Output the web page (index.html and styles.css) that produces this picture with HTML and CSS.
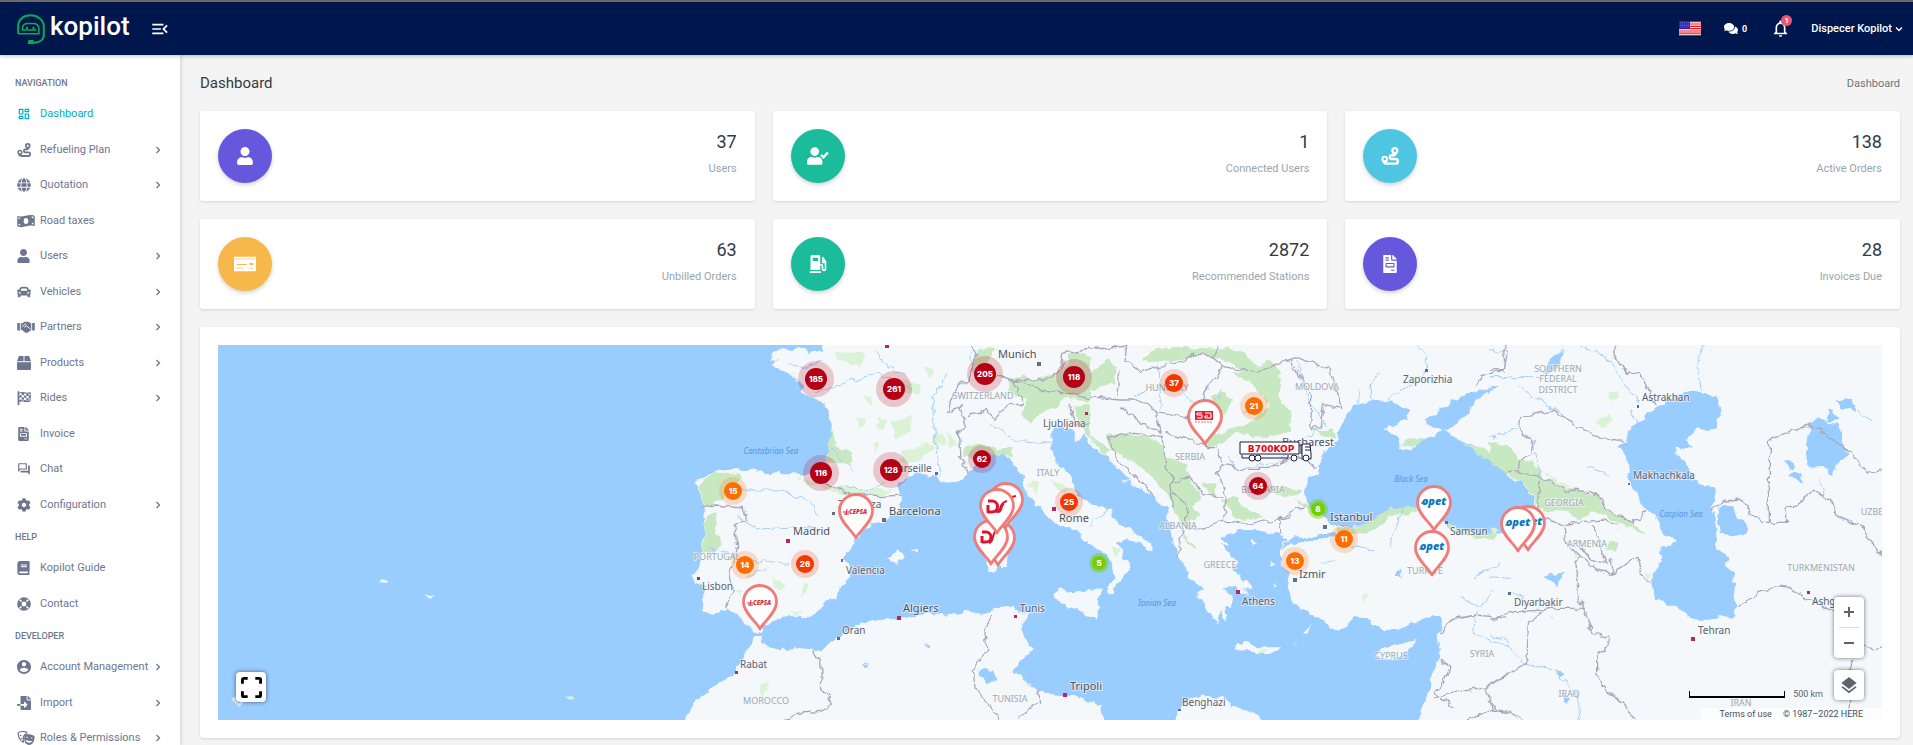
FILE: index.html
```html
<!DOCTYPE html>
<html lang="en">
<head>
<meta charset="utf-8">
<title>Kopilot - Dashboard</title>
<link rel="stylesheet" href="styles.css">
</head>
<body>
<svg class="sprite" aria-hidden="true">
  <symbol id="i-dashboard" viewBox="0 0 24 24"><path d="M19 5v2h-4V5h4M9 5v6H5V5h4m10 8v6h-4v-6h4M9 17v2H5v-2h4M21 3h-8v6h8V3zM11 3H3v10h8V3zm10 8h-8v10h8V11zm-10 4H3v6h8v-6z"/></symbol>
  <symbol id="i-route" viewBox="0 0 24 24"><path fill-rule="evenodd" d="M18.500 0a4.800 4.800 0 0 1 4.800 4.800c0 2.200-1.700 4.700-4.800 7.700-3.100-3-4.800-5.500-4.800-7.700A4.800 4.800 0 0 1 18.500 0zm0 3a1.900 1.900 0 1 0 0 3.800 1.900 1.900 0 0 0 0-3.800zM5 11.500a4.500 4.500 0 0 1 4.500 4.500c0 2.200-1.500 4.600-4.500 8-3-3.400-4.500-5.800-4.500-8A4.500 4.500 0 0 1 5 11.500zm0 2.700a1.800 1.800 0 1 0 0 3.600 1.800 1.800 0 0 0 0-3.600z"/><path d="M17.500 11h-3.200a2.500 2.500 0 0 0 0 5h5.200a3 3 0 0 1 0 6.200H6.500" fill="none" stroke="currentColor" stroke-width="3.200"/></symbol>
  <symbol id="i-globe" viewBox="0 0 496 512"><path d="M336.500 160C322 70.700 287.800 8 248 8s-74 62.700-88.500 152h177zM152 256c0 22.200 1.200 43.500 3.300 64h185.300c2.100-20.500 3.300-41.800 3.300-64s-1.200-43.500-3.300-64H155.300c-2.100 20.500-3.300 41.800-3.300 64zm324.700-96c-28.600-67.900-86.500-120.400-158-141.600 24.400 33.800 41.200 84.700 50 141.600h108zM177.200 18.400C105.800 39.600 47.800 92.100 19.300 160h108c8.700-56.900 25.500-107.800 49.900-141.600zM487.400 192H372.700c2.100 21 3.300 42.500 3.300 64s-1.200 43-3.300 64h114.600c5.500-20.500 8.600-41.800 8.600-64s-3.100-43.500-8.500-64zM120 256c0-21.500 1.200-43 3.300-64H8.600C3.200 212.500 0 233.800 0 256s3.200 43.500 8.600 64h114.600c-2-21-3.200-42.500-3.200-64zm39.500 96c14.500 89.300 48.700 152 88.500 152s74-62.700 88.500-152h-177zm159.300 141.600c71.400-21.200 129.400-73.700 158-141.600h-108c-8.800 56.900-25.600 107.800-50 141.600zM19.300 352c28.600 67.900 86.500 120.400 158 141.600-24.400-33.800-41.200-84.700-50-141.600h-108z"/></symbol>
  <symbol id="i-money" viewBox="0 0 30 24"><path fill-rule="evenodd" d="M1.500 3.500C10 6.800 18-.5 28.500 2.600c.9.300 1.500 1 1.500 1.900v14.400c0 1.200-.8 1.900-1.800 1.600C18.500 17.500 11 25.200 1.400 21.600.6 21.200 0 20.400 0 19.500V4.600c0-1 .7-1.500 1.500-1.100zM15 7a4 5 0 1 0 0 10 4 5 0 0 0 0-10zM2.300 6v3c1.700 0 3-1.100 3-2.500zM27.700 4.800c-1.700-.3-2.700-.4-3.300-.3.200 1.600 1.500 2.800 3.300 2.900zM2.300 19c1.200.5 2.300.6 3.300.6-.1-1.700-1.400-3-3.300-3zM24.700 17.500c1.200.1 2.200.3 3 .5v-3.500c-1.700.1-3 1.400-3 3z"/></symbol>
  <symbol id="i-user" viewBox="0 0 448 512"><path d="M224 256c70.700 0 128-57.300 128-128S294.700 0 224 0 96 57.300 96 128s57.300 128 128 128zm89.600 32h-16.700c-22.200 10.200-46.900 16-72.900 16s-50.600-5.800-72.900-16h-16.700C60.200 288 0 348.200 0 422.400V464c0 26.500 21.500 48 48 48h352c26.500 0 48-21.500 48-48v-41.600c0-74.200-60.200-134.400-134.400-134.400z"/></symbol>
  <symbol id="i-usercheck" viewBox="0 0 640 512"><path d="M224 256c70.700 0 128-57.300 128-128S294.700 0 224 0 96 57.300 96 128s57.300 128 128 128zm89.600 32h-16.700c-22.200 10.200-46.900 16-72.900 16s-50.600-5.800-72.900-16h-16.700C60.200 288 0 348.200 0 422.400V464c0 26.500 21.500 48 48 48h352c26.500 0 48-21.500 48-48v-41.600c0-74.200-60.200-134.400-134.400-134.400z"/><path d="M410 225l70 70 130-140" fill="none" stroke="currentColor" stroke-width="72"/></symbol>
  <symbol id="i-car" viewBox="0 0 512 512"><path d="M499.990 176h-59.870l-16.640-41.600C406.380 91.630 365.570 64 319.500 64h-127c-46.060 0-86.880 27.630-103.990 70.400L71.870 176H12.010C4.200 176-1.530 183.340.37 190.910l6 24C7.700 220.250 12.500 224 18.010 224h20.070C24.650 235.730 16 252.780 16 272v48c0 16.120 6.160 30.670 16 41.930V416c0 17.670 14.330 32 32 32h32c17.670 0 32-14.330 32-32v-32h256v32c0 17.670 14.330 32 32 32h32c17.670 0 32-14.330 32-32v-54.070c9.840-11.250 16-25.800 16-41.930v-48c0-19.220-8.650-36.270-22.070-48H494c5.510 0 10.310-3.750 11.640-9.090l6-24c1.890-7.570-3.840-14.910-11.650-14.910zm-352.060-17.830c7.290-18.220 24.940-30.170 44.570-30.170h127c19.630 0 37.280 11.950 44.570 30.170L384 208H128l19.930-49.830zM96 319.800c-19.200 0-32-12.760-32-31.900S76.800 256 96 256s48 28.710 48 47.850-28.800 15.950-48 15.950zm320 0c-19.200 0-48 3.190-48-15.950S396.800 256 416 256s32 12.760 32 31.900-12.800 31.900-32 31.900z"/></symbol>
  <symbol id="i-handshake" viewBox="0 0 30 24"><path d="M0 5h4.500v13H0zM25.500 5H30v13h-4.500zM6 5.500h3l3-2.500h7l4 2.500h1V18h-1.500l-4.500 4h-4l-6-5H6z"/><path d="M8.500 11.500l5-4.500 2 .3M12 12.500l4-2.500 6.500 5.500" fill="none" stroke="#fff" stroke-width="1.500"/></symbol>
  <symbol id="i-box" viewBox="0 0 512 512"><path d="M509.500 184.600L458.900 32.800C452.400 13.200 434.100 0 413.400 0H272v192h238.700c-.4-2.500-.4-5-1.200-7.400zM240 0H98.600c-20.700 0-39 13.200-45.500 32.800L2.500 184.600c-.8 2.400-.8 4.900-1.200 7.400H240V0zM0 224v240c0 26.500 21.500 48 48 48h416c26.500 0 48-21.500 48-48V224H0z"/></symbol>
  <symbol id="i-flag" viewBox="0 0 24 24"><path d="M1 1.500a1.500 1.500 0 0 1 3 0V24H1z"/><path d="M4 3.500c7-3 10 2.500 18.500-.5v14c-8 3.500-11.500-2.500-18.500.5" fill="none" stroke="currentColor" stroke-width="1.800"/><path d="M8 2.500l4 .7v4l-4-.7zM16 4.500l4 0v4l-4 0zM4 7.500l4-1v4l-4 1zM12 7.200l4 1.300v4l-4-1.300zM20 8.500l3-1v4l-3 1zM8 10.500l4 .7v4l-4-.7zM16 12.500l4 0v4l-4 0zM4 15l4-.5v3l-4 1zM12 15.200l4 1.300v2.500l-4-1z"/></symbol>
  <symbol id="i-invoice" viewBox="0 0 384 512"><path d="M288 256H96v64h192v-64zm89-151L279.100 7c-4.500-4.500-10.600-7-17-7H256v128h128v-6.100c0-6.300-2.500-12.400-7-16.900zm-153 31V0H24C10.700 0 0 10.700 0 24v464c0 13.300 10.700 24 24 24h336c13.300 0 24-10.700 24-24V160H248c-13.200 0-24-10.800-24-24zM64 72c0-4.420 3.580-8 8-8h80c4.420 0 8 3.580 8 8v16c0 4.420-3.580 8-8 8H72c-4.420 0-8-3.580-8-8V72zm0 64c0-4.420 3.580-8 8-8h80c4.420 0 8 3.580 8 8v16c0 4.420-3.580 8-8 8H72c-4.420 0-8-3.580-8-8v-16zm256 304c0 4.420-3.580 8-8 8h-80c-4.420 0-8-3.580-8-8v-16c0-4.420 3.580-8 8-8h80c4.420 0 8 3.580 8 8v16zm0-200v96c0 8.840-7.160 16-16 16H80c-8.840 0-16-7.160-16-16v-96c0-8.840 7.160-16 16-16h224c8.840 0 16 7.160 16 16z"/></symbol>
  <symbol id="i-chat" viewBox="0 0 24 24"><path d="M15 4v7H5.170L4 12.170V4h11m1-2H3c-.55 0-1 .45-1 1v14l4-4h10c.55 0 1-.45 1-1V3c0-.55-.45-1-1-1zm5 4h-2v9H6v2c0 .55.45 1 1 1h11l4 4V7c0-.55-.45-1-1-1z"/></symbol>
  <symbol id="i-cog" viewBox="0 0 512 512"><path d="M487.400 315.700l-42.600-24.600c4.300-23.200 4.300-47 0-70.200l42.600-24.600c4.900-2.800 7.100-8.600 5.500-14-11.100-35.600-30-67.800-54.700-94.600-3.800-4.100-10-5.100-14.800-2.300L380.800 110c-17.900-15.400-38.500-27.300-60.800-35.100V25.800c0-5.600-3.900-10.500-9.400-11.700-36.700-8.200-74.300-7.800-109.200 0-5.500 1.200-9.400 6.100-9.400 11.700V75c-22.200 7.900-42.800 19.800-60.800 35.100L88.700 85.500c-4.900-2.800-11-1.900-14.800 2.300-24.700 26.700-43.600 58.900-54.700 94.600-1.700 5.400.6 11.200 5.500 14L67.300 221c-4.300 23.200-4.300 47 0 70.200l-42.600 24.600c-4.900 2.800-7.100 8.600-5.500 14 11.100 35.600 30 67.800 54.700 94.600 3.800 4.100 10 5.100 14.800 2.300l42.600-24.600c17.900 15.400 38.500 27.300 60.800 35.100v49.200c0 5.600 3.900 10.500 9.400 11.700 36.700 8.200 74.300 7.800 109.200 0 5.500-1.200 9.400-6.100 9.400-11.700v-49.200c22.200-7.900 42.800-19.800 60.800-35.100l42.600 24.600c4.900 2.800 11 1.900 14.800-2.300 24.700-26.700 43.600-58.900 54.700-94.600 1.500-5.500-.7-11.300-5.600-14.100zM256 336c-44.100 0-80-35.900-80-80s35.900-80 80-80 80 35.900 80 80-35.900 80-80 80z"/></symbol>
  <symbol id="i-book" viewBox="0 0 448 512"><path d="M448 360V24c0-13.300-10.700-24-24-24H96C43 0 0 43 0 96v320c0 53 43 96 96 96h328c13.300 0 24-10.700 24-24v-16c0-7.500-3.500-14.300-8.900-18.700-4.200-15.400-4.200-59.300 0-74.700 5.400-4.300 8.900-11.100 8.900-18.600zM128 134c0-3.300 2.700-6 6-6h212c3.300 0 6 2.700 6 6v20c0 3.300-2.700 6-6 6H134c-3.300 0-6-2.700-6-6v-20zm0 64c0-3.300 2.700-6 6-6h212c3.300 0 6 2.700 6 6v20c0 3.300-2.700 6-6 6H134c-3.300 0-6-2.700-6-6v-20zm253.400 250H96c-17.700 0-32-14.300-32-32 0-17.600 14.400-32 32-32h285.400c-1.900 17.100-1.900 46.900 0 64z"/></symbol>
  <symbol id="i-ring" viewBox="0 0 24 24"><circle cx="12" cy="12" r="8" fill="none" stroke="currentColor" stroke-width="7.500"/><path d="M4.500 4.500l3.200 3.200M19.500 4.500l-3.200 3.200M4.500 19.500l3.200-3.200M19.500 19.500l-3.200-3.200" stroke="#fff" stroke-width="2.600"/></symbol>
  <symbol id="i-account" viewBox="2 2 20 20"><path d="M12 2C6.480 2 2 6.480 2 12s4.480 10 10 10 10-4.480 10-10S17.520 2 12 2zm0 3c1.660 0 3 1.340 3 3s-1.340 3-3 3-3-1.340-3-3 1.340-3 3-3zm0 14.200c-2.500 0-4.710-1.280-6-3.220.03-1.990 4-3.080 6-3.080 1.990 0 5.970 1.090 6 3.080-1.290 1.940-3.500 3.220-6 3.220z"/></symbol>
  <symbol id="i-import" viewBox="0 0 512 512"><path d="M16 288c-8.800 0-16 7.200-16 16v32c0 8.800 7.200 16 16 16h112v-64zm489-183L407.100 7c-4.500-4.500-10.600-7-17-7H384v128h128v-6.100c0-6.300-2.500-12.400-7-16.900zm-153 31V0H152c-13.300 0-24 10.700-24 24v264h128v-65.200c0-14.300 17.300-21.400 27.400-11.300L379 308c6.600 6.700 6.600 17.400 0 24l-95.700 96.400c-10.100 10.100-27.400 3-27.400-11.300V352H128v136c0 13.300 10.700 24 24 24h336c13.300 0 24-10.700 24-24V160H376c-13.200 0-24-10.800-24-24z"/></symbol>
  <symbol id="i-masks" viewBox="0 0 30 24"><path d="M1.500 3C6 .5 11 .2 16 2l.5 3C11 6 10 9 10.500 19 5 17.500 2 12 1.500 3z" fill="none" stroke="currentColor" stroke-width="2"/><path d="M4.500 7.500l3 .5M6 13.500l3-1.500" stroke="currentColor" stroke-width="1.800"/><path fill-rule="evenodd" d="M13 6.500c5-1.700 11-1 16.500 2 .7 5-1 15-9.500 15.500-8-1-9.500-10-7-17.500zm1.800 4l4 1.700c-.5-2.400-3-3-4-1.700zm7.500 2l4 .5c-.5-2-3.200-2.200-4-.5zM14 15c1 6 9 7 12 1.500-4 1-8 .5-12-1.500z"/></symbol>
  <symbol id="i-card" viewBox="0 0 24 16"><path fill-rule="evenodd" d="M0 0h24v2H0zM0 3.500h24V16H0zM3 8v1h11V8zm0 4v1h7v-1zm14-5v2h4V7zm0 5v1h4v-1z"/><path d="M0 2h24v1.500H0z" opacity=".8"/></symbol>
  <symbol id="i-pump" viewBox="0 0 24 24"><path fill-rule="evenodd" d="M2 2a2 2 0 0 1 2-2h9a2 2 0 0 1 2 2v18H2zm3 1.500V8h7V3.500zM1 21.500h15V24H1z"/><path d="M15 13h1.500c1.500 0 1.500 1 1.500 2v3.500a2 2 0 0 0 4 0V9l-4-6M18.500 5v5h3" fill="none" stroke="currentColor" stroke-width="2.200"/></symbol>
  <symbol id="i-comments" viewBox="0 0 576 512"><path d="M416 192c0-88.400-93.100-160-208-160S0 103.600 0 192c0 34.300 14.100 65.900 38 92-13.400 30.200-35.500 54.200-35.800 54.500-2.200 2.300-2.800 5.700-1.500 8.700S4.800 352 8 352c36.600 0 66.900-12.300 88.700-25 32.200 15.700 70.300 25 111.300 25 114.900 0 208-71.600 208-160zm122 220c23.900-26 38-57.700 38-92 0-66.900-53.500-124.200-129.300-148.100.9 6.600 1.300 13.300 1.300 20.100 0 105.900-107.700 192-240 192-10.800 0-21.300-.8-31.700-1.900C207.800 439.600 281.800 480 368 480c41 0 79.100-9.200 111.300-25 21.800 12.700 52.100 25 88.700 25 3.200 0 6.100-1.900 7.300-4.800 1.300-2.900.7-6.300-1.500-8.700-.3-.3-22.400-24.200-35.800-54.500z"/></symbol>
  <symbol id="i-bell" viewBox="3 2 18 20"><path d="M12 22c1.100 0 2-.9 2-2h-4c0 1.100.9 2 2 2zm6-6v-5c0-3.070-1.630-5.640-4.500-6.320V4c0-.83-.67-1.500-1.500-1.500s-1.500.67-1.500 1.500v.68C7.640 5.360 6 7.920 6 11v5l-2 2v1h16v-1l-2-2zm-2 1H8v-6c0-2.480 1.510-4.500 4-4.500s4 2.020 4 4.500v6z"/></symbol>
  <symbol id="i-menu" viewBox="3 5 18 14"><path d="M3 18h13v-2H3v2zm0-5h10v-2H3v2zm0-7v2h13V6H3zm18 9.590L17.420 12 21 8.410 19.590 7l-5 5 5 5L21 15.590z"/></symbol>
  <symbol id="i-right" viewBox="0 0 8 8"><path d="M2.500 1l3 3-3 3" fill="none" stroke="currentColor" stroke-width="1.300"/></symbol>
  <symbol id="i-down" viewBox="0 0 8 8"><path d="M1 2.500l3 3 3-3" fill="none" stroke="currentColor" stroke-width="1.300"/></symbol>
  <symbol id="i-layers" viewBox="3 2 18 20"><path d="M11.990 18.540l-7.370-5.730L3 14.070l9 7 9-7-1.630-1.270-7.380 5.740zM12 16l7.360-5.730L21 9l-9-7-9 7 1.630 1.270L12 16z"/></symbol>
  <symbol id="i-full" viewBox="0 0 22 22"><path d="M1.500 7V3a1.500 1.500 0 0 1 1.500-1.500h4M15 1.500h4A1.500 1.500 0 0 1 20.500 3v4M20.500 15v4a1.500 1.500 0 0 1-1.500 1.500h-4M7 20.500H3A1.500 1.500 0 0 1 1.500 19v-4" fill="none" stroke="#000" stroke-width="3"/></symbol>
  <symbol id="pin" viewBox="-18 -46 36 47" overflow="visible"><path d="M0-1C-3-8-16.500-17-16.500-28a16.500 16.500 0 0 1 33 0C16.500-17 3-8 0-1z" fill="#fff" stroke="#f07c7a" stroke-width="2.800" stroke-linejoin="round"/></symbol>
</svg>

<header class="topbar">
  <a class="brand" href="#" aria-label="kopilot">
    <svg class="brand-mark" viewBox="0 0 28 30" aria-hidden="true"><path d="M1.200 20V12C1.200 5.500 6.500 1.200 13.500 1.200S26.800 6 26.800 12.500v8c0 5.500-4.500 8.300-10.500 8.300H13" fill="none" stroke="#0aab55" stroke-width="2"/><path d="M1.200 19.800h20.600V14.500c0-3.500-2.300-5-5.800-5h-5c-3.500 0-5.500 2-5.500 5v1.500h14" fill="none" stroke="#0aab55" stroke-width="1.600"/><circle cx="10" cy="14" r="1.200" fill="#0aab55"/><circle cx="16.500" cy="14" r="1.200" fill="#0aab55"/><path d="M10.500 30l1-4h5v4z" fill="#0aab55"/></svg>
    <span class="brand-name">kopilot</span>
  </a>
  <button class="icon-btn menu-btn" aria-label="Toggle menu"><svg><use href="#i-menu"/></svg></button>
  <div class="top-actions">
    <button class="icon-btn" aria-label="Language: English">
      <svg class="us-flag" viewBox="0 0 22 15"><path fill="#fff" d="M0 0h22v15H0z"/><path stroke="#f01018" stroke-width="1.200" d="M0 .6h22M0 3h22M0 5.300h22M0 7.600h22M0 10h22M0 12.200h22M0 14.400h22"/><path fill="#2a22b0" d="M0 0h11v8H0z"/><path stroke="#8a86dc" stroke-width=".7" stroke-dasharray="1 1" d="M1 1.500h9M1.500 3h9M1 4.500h9M1.500 6h9"/></svg>
    </button>
    <button class="icon-btn messages" aria-label="Messages"><svg><use href="#i-comments"/></svg><span>0</span></button>
    <button class="icon-btn bell" aria-label="Notifications"><svg><use href="#i-bell"/></svg><span class="badge">1</span></button>
    <button class="icon-btn account">Dispecer Kopilot<svg><use href="#i-down"/></svg></button>
  </div>
</header>

<div class="shell">
  <nav class="sidebar">
    <h2>Navigation</h2>
    <ul>
      <li><a class="active" href="#"><svg class="ico"><use href="#i-dashboard"/></svg>Dashboard</a></li>
      <li><a href="#"><svg class="ico"><use href="#i-route"/></svg>Refueling Plan<svg class="chev"><use href="#i-right"/></svg></a></li>
      <li><a href="#"><svg class="ico"><use href="#i-globe"/></svg>Quotation<svg class="chev"><use href="#i-right"/></svg></a></li>
      <li><a href="#"><svg class="ico wide"><use href="#i-money"/></svg>Road taxes</a></li>
      <li><a href="#"><svg class="ico thin"><use href="#i-user"/></svg>Users<svg class="chev"><use href="#i-right"/></svg></a></li>
      <li><a href="#"><svg class="ico"><use href="#i-car"/></svg>Vehicles<svg class="chev"><use href="#i-right"/></svg></a></li>
      <li><a href="#"><svg class="ico wide"><use href="#i-handshake"/></svg>Partners<svg class="chev"><use href="#i-right"/></svg></a></li>
      <li><a href="#"><svg class="ico"><use href="#i-box"/></svg>Products<svg class="chev"><use href="#i-right"/></svg></a></li>
      <li><a href="#"><svg class="ico"><use href="#i-flag"/></svg>Rides<svg class="chev"><use href="#i-right"/></svg></a></li>
      <li><a href="#"><svg class="ico thin"><use href="#i-invoice"/></svg>Invoice</a></li>
      <li><a href="#"><svg class="ico"><use href="#i-chat"/></svg>Chat</a></li>
      <li><a href="#"><svg class="ico"><use href="#i-cog"/></svg>Configuration<svg class="chev"><use href="#i-right"/></svg></a></li>
    </ul>
    <h2>Help</h2>
    <ul>
      <li><a href="#"><svg class="ico thin"><use href="#i-book"/></svg>Kopilot Guide</a></li>
      <li><a href="#"><svg class="ico"><use href="#i-ring"/></svg>Contact</a></li>
    </ul>
    <h2>Developer</h2>
    <ul>
      <li><a href="#"><svg class="ico"><use href="#i-account"/></svg>Account Management<svg class="chev"><use href="#i-right"/></svg></a></li>
      <li><a href="#"><svg class="ico"><use href="#i-import"/></svg>Import<svg class="chev"><use href="#i-right"/></svg></a></li>
      <li><a href="#"><svg class="ico wide"><use href="#i-masks"/></svg>Roles &amp; Permissions<svg class="chev"><use href="#i-right"/></svg></a></li>
    </ul>
  </nav>

  <main class="content">
    <div class="page-head"><h1>Dashboard</h1><span>Dashboard</span></div>
    <section class="stats">
      <article class="card stat"><span class="disc violet"><svg><use href="#i-user"/></svg></span><div><strong>37</strong><span>Users</span></div></article>
      <article class="card stat"><span class="disc green"><svg class="big"><use href="#i-usercheck"/></svg></span><div><strong>1</strong><span>Connected Users</span></div></article>
      <article class="card stat"><span class="disc cyan"><svg><use href="#i-route"/></svg></span><div><strong>138</strong><span>Active Orders</span></div></article>
      <article class="card stat"><span class="disc amber"><svg class="big"><use href="#i-card"/></svg></span><div><strong>63</strong><span>Unbilled Orders</span></div></article>
      <article class="card stat"><span class="disc green"><svg><use href="#i-pump"/></svg></span><div><strong>2872</strong><span>Recommended Stations</span></div></article>
      <article class="card stat"><span class="disc violet"><svg><use href="#i-invoice"/></svg></span><div><strong>28</strong><span>Invoices Due</span></div></article>
    </section>

    <section class="card map-card">
      <div class="map">
        <svg class="map-svg" viewBox="218 345 1664 375" preserveAspectRatio="xMidYMid slice" role="img" aria-label="Map of Europe with stations">
          <defs>
            <filter id="rough" x="0" y="0" width="1" height="1" filterUnits="objectBoundingBox" color-interpolation-filters="sRGB"><feTurbulence type="fractalNoise" baseFrequency=".11" numOctaves="2" seed="4"/><feDisplacementMap in="SourceGraphic" scale="8" xChannelSelector="R" yChannelSelector="G"/></filter>
          </defs>
          <rect class="sea" x="200" y="330" width="1700" height="400"/>
          <g filter="url(#rough)">
            <rect x="190" y="320" width="1720" height="420" fill="none"/>
            <!-- western sheet -->
            <g transform="translate(680 330) scale(.33333)">
              <g class="land">
                <path d="M428 20L425 62 385 72 372 55 345 50 335 60 300 58 272 72 270 92 300 88 275 108 315 122 335 132 370 165 365 190 400 205 440 228 445 260 455 285 448 340 440 385 430 420 400 438 340 430 270 430 200 420 130 415 95 430 50 455 55 480 68 520 75 560 75 600 66 650 65 690 40 740 52 760 75 768 72 800 68 842 100 848 140 838 175 850 190 880 235 908 250 885 290 865 340 860 400 862 430 815 468 808 475 775 515 740 500 700 492 680 530 630 560 590 610 575 660 540 665 510 655 490 655 460 680 440 720 425 765 440 800 458 830 455 865 425 905 400 925 372 950 370 990 385 1025 440 1030 470 1070 525 1125 580 1185 600 1225 640 1265 660 1265 540 1195 500 1165 430 1120 395 1120 360 1110 345 1118 300 1150 290 1180 300 1190 340 1215 310 1235 355 1280 375V20z"/>
                <path d="M225 918L245 920 245 940 280 958 350 955 420 965 450 940 500 905 540 880 650 868 740 850 800 858 850 845 910 855 940 835 1000 830 1020 850 1055 850 1020 890 1035 920 1055 960 1000 1020 1030 1050 1080 1085 1170 1095 1262 1125 1275 1200H0L50 1110 100 1070 160 1035 200 960z"/>
                <path d="M1120 790L1140 775 1175 790 1240 778 1275 770 1250 810 1260 840 1250 868 1210 850 1130 810zM905 590L990 570 985 640 980 712 955 710 950 728 925 725 918 690zM622 688L655 662 675 678 650 702zM692 660L715 656 716 668zM950 480L975 470 985 540 965 550z"/>
              </g>
              <g class="wood">
                <path d="M95 428L180 428 195 450 150 470 130 500 90 530 68 520 55 470zM80 560L110 545 105 600 125 640 100 670 66 668zM452 290L468 350 510 370 515 400 470 400 440 395zM890 55L945 50 930 90 880 130zM985 150L1030 135 1060 150 1150 120 1180 60 1260 90V220L1150 205 1140 230 1080 250 1050 280 1030 260 1040 205 985 190zM1180 230L1260 215V360L1200 290zM850 355L900 340 960 360 1000 350 990 380 930 370 880 390 850 380z"/>
                <path class="pale" d="M460 65L560 70 540 110 480 90zM730 110L765 115 750 145zM665 150L720 160 715 200 680 195zM550 190L580 200 570 220zM525 265L560 265 540 300zM590 262L625 275 610 300 590 290zM635 270L695 260 690 300 650 325zM665 365L740 340 770 350 700 400 660 400zM760 320L790 310 800 345 765 345zM580 340L597 340 590 375zM270 740L318 765 300 780zM370 755L390 765 360 800zM330 845L375 843 350 858zM160 780L190 785 180 800zM235 1080L262 1050 265 1075 245 1100zM1040 460L1080 450 1070 490zM1110 450L1165 470 1150 490zM345 440L400 455 470 470 640 480 600 500 480 490 380 460zM800 300L830 340 810 360z"/>
              </g>
              <g class="water"><path d="M890 1022L940 1025 950 1050 920 1060zM730 945L750 942 748 950zM540 1005L565 995 550 1012zM488 1028L508 1022z"/></g>
              <g class="river"><path d="M400 190L460 170 520 150 600 130 700 180M520 420L480 380 452 350M780 440L765 300 760 200 800 130M590 60L620 110 680 140M320 100L380 110 430 90M870 60L880 130 960 130M80 650L200 690 330 700M160 480L300 480 380 510 420 560M620 460L560 480 500 470M930 280L1000 330 1110 340M170 560L240 600 400 590M200 740L270 710"/></g>
              <g class="border"><path d="M64 530L110 525 190 535 200 570 165 590 170 650 150 730 160 780 140 835M400 445L480 480 520 495 600 500 660 495M865 425L840 380 835 310 860 290 840 230 800 245 835 165 860 150 890 80 870 45M860 260L920 235 945 265 980 220 1030 225 1000 150 945 135 890 140M985 150L1100 150 1150 110 1145 70 1200 60 1260 50M1000 150L1080 180 1170 190 1260 215M1170 220L1185 280 1260 290M398 965L422 1000 425 1080 455 1120 440 1140 370 1145 320 1170M935 855L915 900 920 960 880 1020 885 1075 925 1120 958 1170M1075 1080L1075 1120 1010 1170"/></g>
            </g>
            <!-- middle sheet -->
            <g transform="translate(1090 330) scale(.33333)">
              <path class="land" d="M0 20V315L30 370 50 375 75 410 130 465 190 500 230 535 240 590 250 650 275 690 290 730 320 765 345 770 320 790 345 830 350 850 365 845 380 880 390 840 410 875 405 820 425 830 430 800 400 775 430 770 455 795 475 800 462 775 487 778 470 755 430 720 445 700 410 665 395 640 420 650 395 620 450 600 500 600 560 610 590 625 570 660 570 690 575 710 600 725 590 770 600 800 620 830 700 870 735 900 775 890 785 860 830 865 870 900 920 900 970 875 1035 855 1055 860 1055 890 1040 930 1050 960 1030 1030 1010 1100 980 1200H1270V20z"/>
              <path class="land" d="M0 520L30 535 70 538 65 555 85 575 120 600 180 640 185 665 175 670 150 640 110 625 80 640 100 660 95 690 115 695 120 720 95 740 70 785 55 790 50 775 75 745 65 720 62 690 30 655 0 640zM258 1200L265 1145 290 1110 345 1092 400 1105 440 1130 510 1160 515 1200zM438 935L470 940 500 955 570 955 560 970 500 968 440 955zM640 905L665 885 655 912zM612 940L620 925 616 942zM480 630L505 640 485 645zM540 690L560 705 545 712zM555 755L562 770 555 772zM90 450L130 452 100 456zM520 800L530 805zM500 720L510 724z"/>
              <path class="water" d="M820 215L790 225 745 300 740 335 700 370 685 435 655 440 640 495 660 530 700 560 740 588 830 590 900 535 980 535 1060 575 1090 600 1180 620 1275 600V440L1200 390 1150 345 1090 320 1060 295 1040 315 1000 330 960 360 930 355 925 325 880 295 950 270 960 240 900 210zM1210 172L1110 195 1060 235 1005 270 1030 295 1080 300 1105 270 1140 250 1150 215zM568 665L600 620 650 625 690 615 735 605 740 618 650 636 600 640zM915 735L930 715 935 745zM795 770L800 790zM440 700zM130 200L170 180 165 190z"/>
              <path class="land" d="M870 955L900 950 980 930 940 975 895 993 865 980z"/>
              <g class="wood"><path d="M155 90L200 55H420L470 70 500 110 540 90 575 130 565 200 605 250 600 300 520 325 440 310 400 340 350 350 360 320 440 290 490 270 540 230 500 170 430 130 460 120 400 90 330 70 240 95zM0 130L60 90 80 105 70 160 0 180zM50 310L180 320 220 350 225 380 290 400 300 450 340 500 310 530 330 560 280 580 250 520 190 440 110 380 60 360zM330 460L380 460 375 500zM395 510L440 500 470 540 530 560 440 570zM540 470L640 480 620 500 550 490zM620 510L660 530 650 540zM740 595L820 590 900 535 990 533 980 545 900 560 830 615 740 605zM1075 580L1180 615 1220 600 1210 630 1090 610zM1115 340L1170 350 1260 400V435L1200 390zM930 350L960 325 1010 325 980 345zM660 300L738 300 735 330zM0 315L60 360 40 375zM360 200L400 190 430 210 400 260zM270 600L320 650 310 660zM240 520L290 520 310 590 270 580z"/><path class="pale" d="M820 785L838 800 820 815zM60 650L90 660 80 680zM500 962L528 962 510 970zM410 760L440 780zM300 200L320 220 300 230z"/></g>
              <g class="river"><path d="M208 110L210 240M280 190L330 240 310 280M400 180L350 250 340 330M410 380L440 415 560 400 640 330 680 300M800 240L810 180M850 215L840 160M830 180L870 130M890 210L950 170 1005 130 1010 80 980 45M620 90L650 200 710 290M940 520L900 650M1160 840L1150 910 1260 950M1110 800L1170 830 1210 780M1150 740L1230 700M780 650L850 660M690 700L740 690M0 590L60 530M460 250L520 240"/></g>
              <g class="border"><path d="M0 60L110 45 105 90 150 125 270 95 310 70 370 80 400 110 350 180 330 230 290 260 200 245 150 210 90 210 0 200M90 120L80 200M370 80L385 45M400 110L500 125 590 90 630 80 720 120 740 190 755 235 700 225 690 290 662 300 665 200 600 90M380 350L350 350 330 290 290 260M200 250L210 310 160 280 90 230M55 320L130 310 220 320 225 390 250 450 240 490 250 530M55 320L80 390 150 450 190 500M230 310L300 330 350 350M380 360L400 400 440 415 540 415 620 380 685 410M400 400L380 430 410 500 400 570 440 580 550 575 640 530M250 460L300 440 340 490 400 500M240 490L290 520 290 600 340 600 400 570M280 600L260 680M600 560L565 570 570 610M1050 915L1080 870 1160 855 1260 865M1035 1100L1190 1070 1260 1030M1050 990L1080 1010 1060 1060 1035 1085 1090 1130M1190 1070L1210 1140 1260 1150M1130 1170L1210 1140M1160 165L1170 140 1240 120 1250 60"/></g>
            </g>
            <!-- eastern sheet -->
            <g transform="translate(1490 330) scale(.33333)">
              <path class="land" d="M50 20H1210V1200H50z"/>
              <path class="water" d="M0 385L50 435 95 460 130 495 135 540 60 585 0 592zM500 230L550 200 600 183 680 200 692 225 685 250 680 298 620 295 585 335 612 358 560 350 552 370 585 390 605 430 605 450 675 480 665 540 680 580 678 655 720 690 700 700 735 730 730 790 740 858 690 862 635 873 590 860 555 825 495 810 485 740 512 690 515 650 560 640 545 622 520 615 495 560 470 540 430 480 415 430 418 405 385 350 405 340 420 290 455 270zM680 540L700 522 730 525 745 570 775 590 770 612 730 618 690 610zM965 285L985 262 1015 280 1045 285 1055 340 1080 375 1040 405 1030 440 1000 405 955 408 948 340zM1015 235L1040 255 1045 270 1010 275zM1035 212L1070 205 1100 220 1095 245 1060 235zM890 390L905 395 910 420 895 415zM900 432L935 430 932 458zM165 740L225 725 205 765 185 755zM198 1010L218 1025 215 1048zM218 1092L240 1105 225 1118zM190 80L225 60 205 110 160 140zM365 595L400 605 380 600zM0 165L20 175 0 185zM15 315L20 325 5 330z"/>
              <g class="wood"><path d="M0 340L60 350 90 390 130 400 160 440 220 470 270 480 330 500 340 530 400 560 470 612 440 605 370 570 300 545 270 570 240 545 140 540 130 490 90 455 50 430 0 395zM355 640L385 640 380 665 350 655z"/><path class="pale" d="M358 185L383 185 380 210 358 208zM320 280L355 250 372 268 345 298zM255 665L268 680 250 690zM465 725L482 740 478 760zM165 425L240 470 200 470zM0 595L30 600 10 615z"/></g>
              <g class="river"><path d="M270 50L350 80 400 160 450 220M640 45L620 100 635 180M85 170L160 220 220 250M0 140L160 140M130 330L150 440M0 915L40 925 95 1000 190 1020 265 1100 270 1170M1040 560L1100 580M990 450L1000 500M0 740L60 745M60 790L100 800M290 410L360 435M1100 240L1140 270M0 60L40 70M0 320L80 295M180 860L190 870M420 240L440 280M160 130L200 80 220 50"/></g>
              <g class="border"><path d="M0 120L40 118 35 70 50 45M380 45L370 80 400 110 410 130 450 130 470 170 495 225M95 260L190 240 260 285 330 325 380 330 410 345M95 260L90 300 130 340 125 380 90 390 85 420M50 425L80 425 150 440 230 480 300 485 330 500 350 540 430 580 470 540M140 550L150 450M135 555L220 585 270 575 340 570 380 580M225 590L230 640 270 680 320 720 370 730 440 680 460 740 485 760M310 585L330 650 350 700 300 690 270 650M370 730L360 690M270 680L255 700 265 790 285 850 310 910 360 920 350 960 320 970 320 1030 350 1085 400 1120 435 1170M285 835L180 835 160 840 80 845 0 868M160 845L115 880 110 1000 0 1060M0 1110L20 1140 60 1145 100 1170M665 540L700 515 745 507 790 550 810 577 890 577 890 535 930 515 970 480 1030 520 1040 555 1120 590 1160 660 1180 678M838 577V325L965 285 1085 370 1133 430 1180 420M740 830L780 810 800 785 860 770 900 775 950 805 1030 845M1120 942L1150 960 1180 952M1085 990L1075 1170"/></g>
            </g>
          </g>
          <path d="M379 582l8 1 1-2-6-2zM384 576l8 4M424 594l6 2 5-1-5 4z" class="land"/><path d="M565 697l7-1 3 3-5 1z" fill="#d5efd2"/>

          <g class="dots"><path d="M885 344h4v4h-4zM1085 412h3v3h-3zM1052 507h4v4h-4zM786 539h4v4h-4zM697 577h3v3h-3zM897 616h4v4h-4zM1014 615h3v3h-3zM735 671h3v3h-3zM1063 693h4v4h-4zM1236 590h4v4h-4zM1807 591h3v3h-3zM1691 637h4v4h-4z"/><path class="slate" d="M1037 362h4v4h-4zM935 472h3v3h-3zM882 518h4v4h-4zM832 512h3v3h-3zM841 559h2v3h-2zM837 637h3v3h-3zM1425 369h3v3h-3zM1323 525h4v4h-4zM1293 578h4v4h-4zM1445 521h3v3h-3zM1178 709h3v2h-3zM1637 405h2v3h-2zM1628 483h2v2h-2zM1508 592h3v3h-3z"/></g>

          <g class="country">
            <text x="983" y="399">SWITZERLAND</text><text x="1048" y="476">ITALY</text><text x="717" y="560">PORTUGAL</text><text x="766" y="704">MOROCCO</text><text x="1010" y="702">TUNISIA</text><text x="1167" y="391">HUNGARY</text><text x="1317" y="390">MOLDOVA</text><text x="1190" y="460">SERBIA</text><text x="1263" y="493">BULGARIA</text><text x="1178" y="529">ALBANIA</text><text x="1220" y="568">GREECE</text><text x="1425" y="574">TURKIYE</text><text x="1391" y="659">CYPRUS</text><text x="1482" y="657">SYRIA</text><text x="1558" y="372">SOUTHERN</text><text x="1558" y="382">FEDERAL</text><text x="1558" y="393">DISTRICT</text><text x="1564" y="506">GEORGIA</text><text x="1587" y="547">ARMENIA</text><text x="1821" y="571">TURKMENISTAN</text><text x="1872" y="515">UZBE</text><text x="1569" y="697">IRAQ</text><text x="1741" y="706">IRAN</text>
          </g>
          <g class="sea-name"><text x="771" y="454">Cantabrian Sea</text><text x="1411" y="482">Black Sea</text><text x="1157" y="606">Ionian Sea</text><text x="1681" y="517">Caspian Sea</text></g>
          <g class="town">
            <text x="1043" y="427">Ljubljana</text><text x="889" y="472">Marseille</text><text x="838" y="508">Zaragoza</text><text x="846" y="574">Valencia</text><text x="702" y="590">Lisbon</text><text x="1020" y="612">Tunis</text><text x="842" y="634">Oran</text><text x="740" y="668">Rabat</text><text x="1403" y="383">Zaporizhia</text><text x="1242" y="605">Athens</text><text x="1450" y="535">Samsun</text><text x="1182" y="706">Benghazi</text><text x="1642" y="401">Astrakhan</text><text x="1633" y="479">Makhachkala</text><text x="1514" y="606">Diyarbakir</text><text x="1812" y="605">Ashgabat</text><text x="1698" y="634">Tehran</text>
          </g>
          <g class="city"><text x="998" y="358">Munich</text><text x="1059" y="522">Rome</text><text x="889" y="515">Barcelona</text><text x="793" y="535">Madrid</text><text x="903" y="612">Algiers</text><text x="1070" y="690">Tripoli</text><text x="1282" y="446">Bucharest</text><text x="1330" y="521">Istanbul</text><text x="1299" y="578">Izmir</text></g>

          <g class="clusters">
            <g class="c-red"><circle class="halo" cx="816" cy="379" r="18"/><circle cx="816" cy="379" r="11"/><circle class="halo" cx="894" cy="389" r="18"/><circle cx="894" cy="389" r="11"/><circle class="halo" cx="985" cy="374" r="18"/><circle cx="985" cy="374" r="11"/><circle class="halo" cx="1074" cy="377" r="18"/><circle cx="1074" cy="377" r="11"/><circle class="halo" cx="821" cy="473" r="18"/><circle cx="821" cy="473" r="11"/><circle class="halo" cx="891" cy="470" r="18"/><circle cx="891" cy="470" r="11"/><circle class="halo" cx="982" cy="459" r="14"/><circle cx="982" cy="459" r="9"/><circle class="halo" cx="1258" cy="486" r="14"/><circle cx="1258" cy="486" r="9"/></g>
            <g class="c-flame"><circle class="halo" cx="1069" cy="502" r="14"/><circle cx="1069" cy="502" r="9"/><circle class="halo" cx="805" cy="564" r="14"/><circle cx="805" cy="564" r="9"/><circle class="halo" cx="1174" cy="383" r="14"/><circle cx="1174" cy="383" r="9"/></g>
            <g class="c-orange"><circle class="halo" cx="733" cy="491" r="14"/><circle cx="733" cy="491" r="9"/><circle class="halo" cx="745" cy="565" r="14"/><circle cx="745" cy="565" r="9"/><circle class="halo" cx="1254" cy="406" r="14"/><circle cx="1254" cy="406" r="9"/><circle class="halo" cx="1295" cy="561" r="14"/><circle cx="1295" cy="561" r="9"/><circle class="halo" cx="1344" cy="539" r="14"/><circle cx="1344" cy="539" r="9"/></g>
            <g class="c-green"><circle class="halo" cx="1318" cy="509" r="10"/><circle cx="1318" cy="509" r="7"/><circle class="halo" cx="1099" cy="563" r="10"/><circle cx="1099" cy="563" r="7"/></g>
            <text x="816" y="382">185</text><text x="894" y="392">261</text><text x="985" y="377">205</text><text x="1074" y="380">118</text><text x="821" y="476">116</text><text x="891" y="473">128</text><text x="982" y="462">62</text><text x="1258" y="489">64</text><text x="1069" y="505">25</text><text x="805" y="567">26</text><text x="1174" y="386">37</text><text x="733" y="494">15</text><text x="745" y="568">14</text><text x="1254" y="409">21</text><text x="1295" y="564">13</text><text x="1344" y="542">11</text><text x="1318" y="512">8</text><text x="1099" y="566">5</text>
          </g>

          <g class="truck" fill="#fff" stroke="#1d1a44">
            <path d="M1302 444h8l1 10v5h-9z"/><path d="M1305 447h6M1305 450h6M1301 444v10M1242 455v3h46v-3" fill="none"/><path d="M1240 442h59v12h-59z"/><circle cx="1252" cy="458" r="3"/><circle cx="1258" cy="458" r="3"/><circle cx="1294" cy="458" r="3"/><circle cx="1306" cy="458" r="3"/>
            <text x="1271" y="452">B700KOP</text>
          </g>

          <g class="pins">
            <use href="#pin" x="838" y="493" width="36" height="47"/><text class="cepsa" x="858" y="514">CEPSA</text><path class="cepsa-mark" d="M843 512h6M844 514h5M847 509l-1 6"/>
            <use href="#pin" x="742" y="584" width="36" height="47"/><text class="cepsa" x="762" y="605">CEPSA</text><path class="cepsa-mark" d="M747 603h6M748 605h5M751 600l-1 6"/>
            <use href="#pin" x="980" y="520" width="36" height="47"/>
            <use href="#pin" x="973" y="519" width="36" height="47"/><path class="ds" d="M982 532h4a5 5 0 0 1 0 10h-4M982 536v7"/><path class="ds-tail" d="M989 543c5 0 3-10 7-12"/>
            <use href="#pin" x="988" y="482" width="36" height="47"/><path class="ds-tail" d="M1008 498l8-2"/>
            <use href="#pin" x="979" y="488" width="36" height="47"/><path class="ds" d="M988 501h4a5 5 0 0 1 0 11h-4M988 505v8"/><path class="ds-tail" d="M996 512c6 0 2-9 11-11M998 512c5 0 2-7 6-8"/>
            <use href="#pin" x="1187" y="399" width="36" height="47"/><rect x="1195" y="411" width="18" height="9" fill="#dc2432"/><path d="M1202 413h-5v2h5v3h-5M1205 413h6v5h-6v-2h3" fill="none" stroke="#fff"/><path d="M1195 422h18" stroke="#e26a74" stroke-dasharray="2 1"/>
            <use href="#pin" x="1416" y="485" width="36" height="47"/><text class="opet" x="1434" y="505">opet</text>
            <use href="#pin" x="1414" y="530" width="36" height="47"/><text class="opet" x="1432" y="550">opet</text>
            <use href="#pin" x="1510" y="505" width="36" height="47"/><text class="opet" x="1530" y="525">opet</text>
            <use href="#pin" x="1500" y="506" width="36" height="47"/><text class="opet" x="1518" y="526">opet</text>
            <path class="opet-bar" d="M1421 503h5M1419 549h5M1505 525h5"/>
          </g>
        </svg>

        <svg class="here" viewBox="0 0 16 12" aria-hidden="true"><path d="M0 4l8 8 8-7-3-3H3z" fill="#dcecfb"/><path d="M5 5l3 3 3-3z" fill="#4c7fae"/></svg>
        <button class="map-btn fullscreen" aria-label="Full screen"><svg><use href="#i-full"/></svg></button>
        <div class="map-tools">
          <div class="zoom"><button aria-label="Zoom in"><svg viewBox="0 0 12 12"><path d="M6 1v10M1 6h10"/></svg></button><button aria-label="Zoom out"><svg viewBox="0 0 12 12"><path d="M1 6h10"/></svg></button></div>
          <div class="tools-row"><div class="scale"><span class="bar"></span><span>500 km</span></div><button class="map-btn" aria-label="Map layers"><svg class="layers"><use href="#i-layers"/></svg></button></div>
        </div>
        <div class="legal"><a href="#">Terms of use</a><span>© 1987–2022 HERE</span></div>
      </div>
    </section>
  </main>
</div>
</body>
</html>
```
FILE: styles.css
```css
* { box-sizing: border-box; }
body { margin: 0; height: 100vh; display: flex; flex-direction: column; overflow: hidden; background: #f4f4f4; font-family: Roboto, "Liberation Sans", sans-serif; color: #343a40; }
.sprite { display: none; }
svg { display: block; fill: currentColor; }
button { font: inherit; color: inherit; background: none; border: 0; padding: 0; cursor: pointer; }
a { color: inherit; text-decoration: none; }
h1, h2, ul { margin: 0; padding: 0; font-weight: 400; list-style: none; }

.topbar { position: relative; z-index: 2; flex: none; display: flex; align-items: center; height: 55px; padding: 0 10px 0 17px; border-top: 2px solid #6a6a6a; background: #00174d; color: #fff; box-shadow: 0 1px 4px rgba(0, 0, 0, .25); }
.brand { display: flex; align-items: center; gap: 5px; }
.brand-mark { width: 28px; height: 30px; }
.brand-name { font-size: 26px; line-height: 30px; font-weight: 500; padding-bottom: 6px; }
.icon-btn { display: flex; align-items: center; }
.menu-btn { margin-left: 22px; }
.menu-btn svg { width: 16px; height: 12px; }
.top-actions { margin-left: auto; display: flex; align-items: center; font-size: 11px; font-weight: 500; }
.us-flag { width: 22px; height: 15px; }
.messages { margin-left: 23px; gap: 4px; font-size: 9px; font-weight: 700; }
.messages svg { width: 14px; height: 13px; }
.bell { position: relative; margin-left: 26px; }
.bell svg { width: 15px; height: 17px; }
.badge { position: absolute; top: -5px; right: -4px; width: 11px; height: 11px; border-radius: 50%; background: #f1556c; font-size: 8px; line-height: 11px; font-weight: 700; text-align: center; }
.account { margin-left: 23px; gap: 3px; }
.account svg { width: 8px; height: 8px; }

.shell { flex: 1; min-height: 0; display: flex; }
.sidebar { flex: none; width: 180px; padding-top: 14px; overflow: hidden; background: #fff; color: #6e768e; box-shadow: 1px 0 4px rgba(0, 0, 0, .16); }
.sidebar h2 { padding: 8px 15px; font-size: 9px; line-height: 12px; font-weight: 500; text-transform: uppercase; }
.sidebar a { display: flex; align-items: center; padding: 9px 18px 10px 17px; font-size: 11px; line-height: 1.5; white-space: nowrap; }
.sidebar .active { color: #00acc1; }
.ico { flex: none; width: 14px; height: 14px; margin-right: 9px; }
.ico.wide { width: 18px; margin-right: 5px; }
.ico.thin { width: 13px; margin-right: 10px; }
.chev { width: 8px; height: 8px; margin-left: auto; }

.content { flex: 1; min-width: 0; display: flex; flex-direction: column; padding: 0 13px 7px 20px; }
.page-head { flex: none; display: flex; align-items: center; justify-content: space-between; height: 56px; font-size: 11px; color: #6c757d; }
.page-head h1 { font-size: 15px; color: #343a40; }
.card { background: #fff; border-radius: 3px; box-shadow: 0 1px 3px rgba(0, 0, 0, .13); }
.stats { flex: none; display: grid; grid-template-columns: repeat(3, 1fr); gap: 18px; }
.stat { display: flex; justify-content: space-between; padding: 18px; }
.stat div { text-align: right; }
.stat strong { display: block; font-size: 18px; line-height: 26px; font-weight: 400; color: #323a46; }
.stat div span { display: block; font-size: 11px; line-height: 28px; color: #98a6ad; }
.disc { width: 54px; height: 54px; border-radius: 50%; display: grid; place-items: center; color: #fff; box-shadow: 0 2px 4px rgba(0, 0, 0, .18); }
.disc svg { width: 18px; height: 18px; }
.disc svg.big { width: 22px; }
.violet { background: #6658dd; }
.green { background: #1abc9c; }
.cyan { background: #4fc6e1; }
.amber { background: #f7b84b; }

.map-card { flex: 1; min-height: 300px; display: flex; margin-top: 18px; padding: 18px; }
.map { position: relative; flex: 1; min-width: 0; overflow: hidden; background: #99ccff; }
.map-svg { position: absolute; inset: 0; width: 100%; height: 100%; }
.sea, .water { fill: #99ccff; }
.land { fill: #f4f8fb; }
.wood { fill: #c8e8c2; }
.pale { fill: #daf3d6; }
.river { fill: none; stroke: #a3d0fb; stroke-width: 3; }
.border { fill: none; stroke: #a9a8bb; stroke-width: 4; stroke-linejoin: round; }
.dots { fill: #b92560; }
.slate { fill: #666b88; }
.map-svg text { font-family: "Noto Sans", "Open Sans", sans-serif; }
.country, .town, .city { paint-order: stroke; stroke: #f4f8fb; stroke-opacity: .6; stroke-width: 2px; }
.country { fill: #a0a8b0; font-size: 9px; text-anchor: middle; }
.town { fill: #5c6170; font-size: 10px; }
.city { fill: #50535c; font-size: 11px; }
.sea-name { fill: #5797dc; font-size: 8px; font-style: italic; text-anchor: middle; }
.halo { opacity: .2; }
.c-red { fill: #b60016; }
.c-flame { fill: #f03800; }
.c-orange { fill: #ff6d00; }
.c-green { fill: #72cf00; }
.c-green .halo { opacity: .45; }
.clusters text { fill: #fff; font-family: Inter, "Liberation Sans", sans-serif; font-size: 8px; font-weight: 800; text-anchor: middle; }
.truck text { fill: #f00016; stroke: none; font-family: "DejaVu Sans", sans-serif; font-size: 9px; font-weight: 700; text-anchor: middle; }
.pins text { font-family: "Open Sans", sans-serif; font-weight: 800; font-style: italic; text-anchor: middle; }
.pins .cepsa { fill: #d92c35; font-size: 6px; }
.cepsa-mark { fill: none; stroke: #d92c35; }
.pins .opet { fill: #0a78bd; font-size: 11px; }
.opet-bar { stroke: #0a78bd; }
.ds { fill: none; stroke: #d81632; stroke-width: 3; }
.ds-tail { fill: none; stroke: #d81632; stroke-width: 2; }

.map-btn, .zoom { background: #fff; border-radius: 4px; box-shadow: 0 0 4px rgba(15, 22, 33, .6); color: #5e646b; }
.map-btn { width: 30px; height: 30px; display: grid; place-items: center; }
.fullscreen { position: absolute; left: 18px; bottom: 18px; }
.fullscreen svg { width: 21px; height: 21px; }
.here { position: absolute; left: 13px; bottom: 13px; width: 16px; height: 12px; }
.map-tools { position: absolute; right: 18px; bottom: 20px; display: flex; flex-direction: column; align-items: flex-end; gap: 12px; }
.zoom { width: 30px; padding: 0 5px; }
.zoom button { width: 100%; height: 30px; display: grid; place-items: center; }
.zoom button + button { border-top: 1px solid #dbdde0; height: 31px; }
.zoom svg { width: 12px; height: 12px; fill: none; stroke: currentColor; stroke-width: 2; }
.layers { width: 16px; height: 17px; }
.tools-row { display: flex; align-items: flex-end; gap: 11px; }
.scale { display: flex; align-items: center; gap: 8px; font-size: 9px; line-height: 12px; color: #5e646b; }
.bar { width: 96px; height: 7px; border: solid #000; border-width: 0 1px 2px; }
.legal { position: absolute; right: 0; bottom: 0; display: flex; gap: 11px; padding: 0 19px 0 18px; background: rgba(255, 255, 255, .75); font-size: 9px; line-height: 12px; color: #4a5058; }
```
